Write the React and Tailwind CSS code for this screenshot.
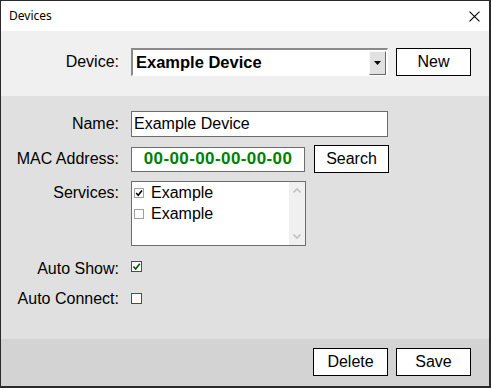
import React from "react";

const F = { fontFamily: '"Liberation Sans", Arial, sans-serif' };

function CheckBox({ size = 11, border = "#a0a0a0", checked = false, check = "#000", className = "" }) {
  return (
    <svg width={size} height={size} viewBox={`0 0 ${size} ${size}`} className={"shrink-0 " + className}>
      <rect x="0.5" y="0.5" width={size - 1} height={size - 1} fill="#fff" stroke={border} strokeWidth="1" />
      {checked && (
        <path
          d={`M${size * 0.22} ${size * 0.5} L${size * 0.42} ${size * 0.72} L${size * 0.8} ${size * 0.25}`}
          fill="none"
          stroke={check}
          strokeWidth="1.6"
        />
      )}
    </svg>
  );
}

function Btn({ children }) {
  return (
    <div className="w-[75px] h-[28px] bg-white border border-black flex items-center justify-center text-[16px] text-black leading-none">
      {children}
    </div>
  );
}

function Label({ children, className = "" }) {
  return (
    <div className={"w-[118px] shrink-0 text-right text-[16px] leading-[18px] text-black " + className}>
      {children}
    </div>
  );
}

export default function App() {
  return (
    <div
      className="w-[491px] h-[388px] bg-white border-t border-l border-r-2 border-b-2 border-[#2a2a2a] flex flex-col overflow-hidden"
      style={F}
    >
      {/* title bar */}
      <div className="h-[30px] shrink-0 bg-white flex items-center justify-between pl-[8px] pr-[9px]">
        <span className="text-[12px] text-black" style={{ fontFamily: '"Noto Sans", sans-serif' }}>
          Devices
        </span>
        <svg viewBox="0 0 10 10" className="w-[11px] h-[11px] mt-[1px]">
          <path d="M0.5 0.5 L9.5 9.5 M9.5 0.5 L0.5 9.5" stroke="#000" strokeWidth="1" />
        </svg>
      </div>

      {/* header */}
      <div className="h-[65px] shrink-0 bg-[#f0f0f0] pt-[17px]">
        <div className="flex items-center h-[28px]">
          <Label>Device:</Label>
          <div className="ml-[12px] w-[257px] h-[28px] border-t-2 border-l-2 border-[#8a8a8a] border-b border-r border-b-white border-r-white bg-white flex items-center">
            <div className="flex-1 pl-[3px] font-bold text-[16.5px] text-black leading-none">Example Device</div>
            <div className="w-[17px] h-[24px] mr-[1px] bg-[#e1e1e1] border border-t-[#f8f8f8] border-l-[#f8f8f8] border-b-[#6a6a6a] border-r-[#6a6a6a] flex items-center justify-center">
              <svg viewBox="0 0 7 4" className="w-[7px] h-[4px]">
                <path d="M0 0 L7 0 L3.5 4 Z" fill="#000" />
              </svg>
            </div>
          </div>
          <div className="ml-[8px]">
            <Btn>New</Btn>
          </div>
        </div>
      </div>

      {/* body */}
      <div className="flex-1 bg-[#e0e0e0] pt-[15px]">
        <div className="flex items-center h-[26px]">
          <Label>Name:</Label>
          <div className="ml-[12px] w-[257px] h-[26px] bg-white border border-[#6d6d6d] flex items-center pl-[2px] text-[16px] text-black">
            Example Device
          </div>
        </div>

        <div className="flex items-center h-[28px] mt-[8px]">
          <Label>MAC Address:</Label>
          <div className="ml-[12px] w-[174px] h-[25px] bg-white border border-[#6d6d6d] flex items-center justify-center font-bold text-[17px] text-[#008000] tracking-[0.4px]">
            00-00-00-00-00-00
          </div>
          <div className="ml-[9px]">
            <Btn>Search</Btn>
          </div>
        </div>

        <div className="flex mt-[8px]">
          <Label className="pt-[3px]">Services:</Label>
          <div className="ml-[12px] w-[175px] h-[65px] bg-white border border-[#6d6d6d] flex">
            <div className="flex-1">
              {[true, false].map((c, i) => (
                <div key={i} className="flex items-center h-[21px] pl-[2px]">
                  <CheckBox size={10} border="#a0a0a0" checked={c} check="#000" />
                  <span className="ml-[7px] text-[16px] text-black">Example</span>
                </div>
              ))}
            </div>
            <div className="w-[16px] bg-[#f0f0f0] flex flex-col items-center justify-between py-[6px]">
              <svg viewBox="0 0 8 5" className="w-[8px] h-[5px]">
                <path d="M0.5 4.5 L4 1 L7.5 4.5" fill="none" stroke="#c2c2c2" strokeWidth="1.6" />
              </svg>
              <svg viewBox="0 0 8 5" className="w-[8px] h-[5px]">
                <path d="M0.5 0.5 L4 4 L7.5 0.5" fill="none" stroke="#c2c2c2" strokeWidth="1.6" />
              </svg>
            </div>
          </div>
        </div>

        <div className="flex h-[20px] mt-[13px]">
          <Label className="pt-[1px]">Auto Show:</Label>
          <CheckBox size={11} border="#008000" checked check="#0b4a0b" className="ml-[12px] mt-[2px]" />
        </div>

        <div className="flex h-[20px] mt-[10px]">
          <Label className="pt-[1px]">Auto Connect:</Label>
          <CheckBox size={11} border="#ff0000" className="ml-[12px] mt-[4px]" />
        </div>
      </div>

      {/* footer */}
      <div className="h-[47px] shrink-0 bg-[#d3d3d3] pt-[9px] flex justify-end gap-[8px] pr-[18px]">
        <Btn>Delete</Btn>
        <Btn>Save</Btn>
      </div>
    </div>
  );
}
